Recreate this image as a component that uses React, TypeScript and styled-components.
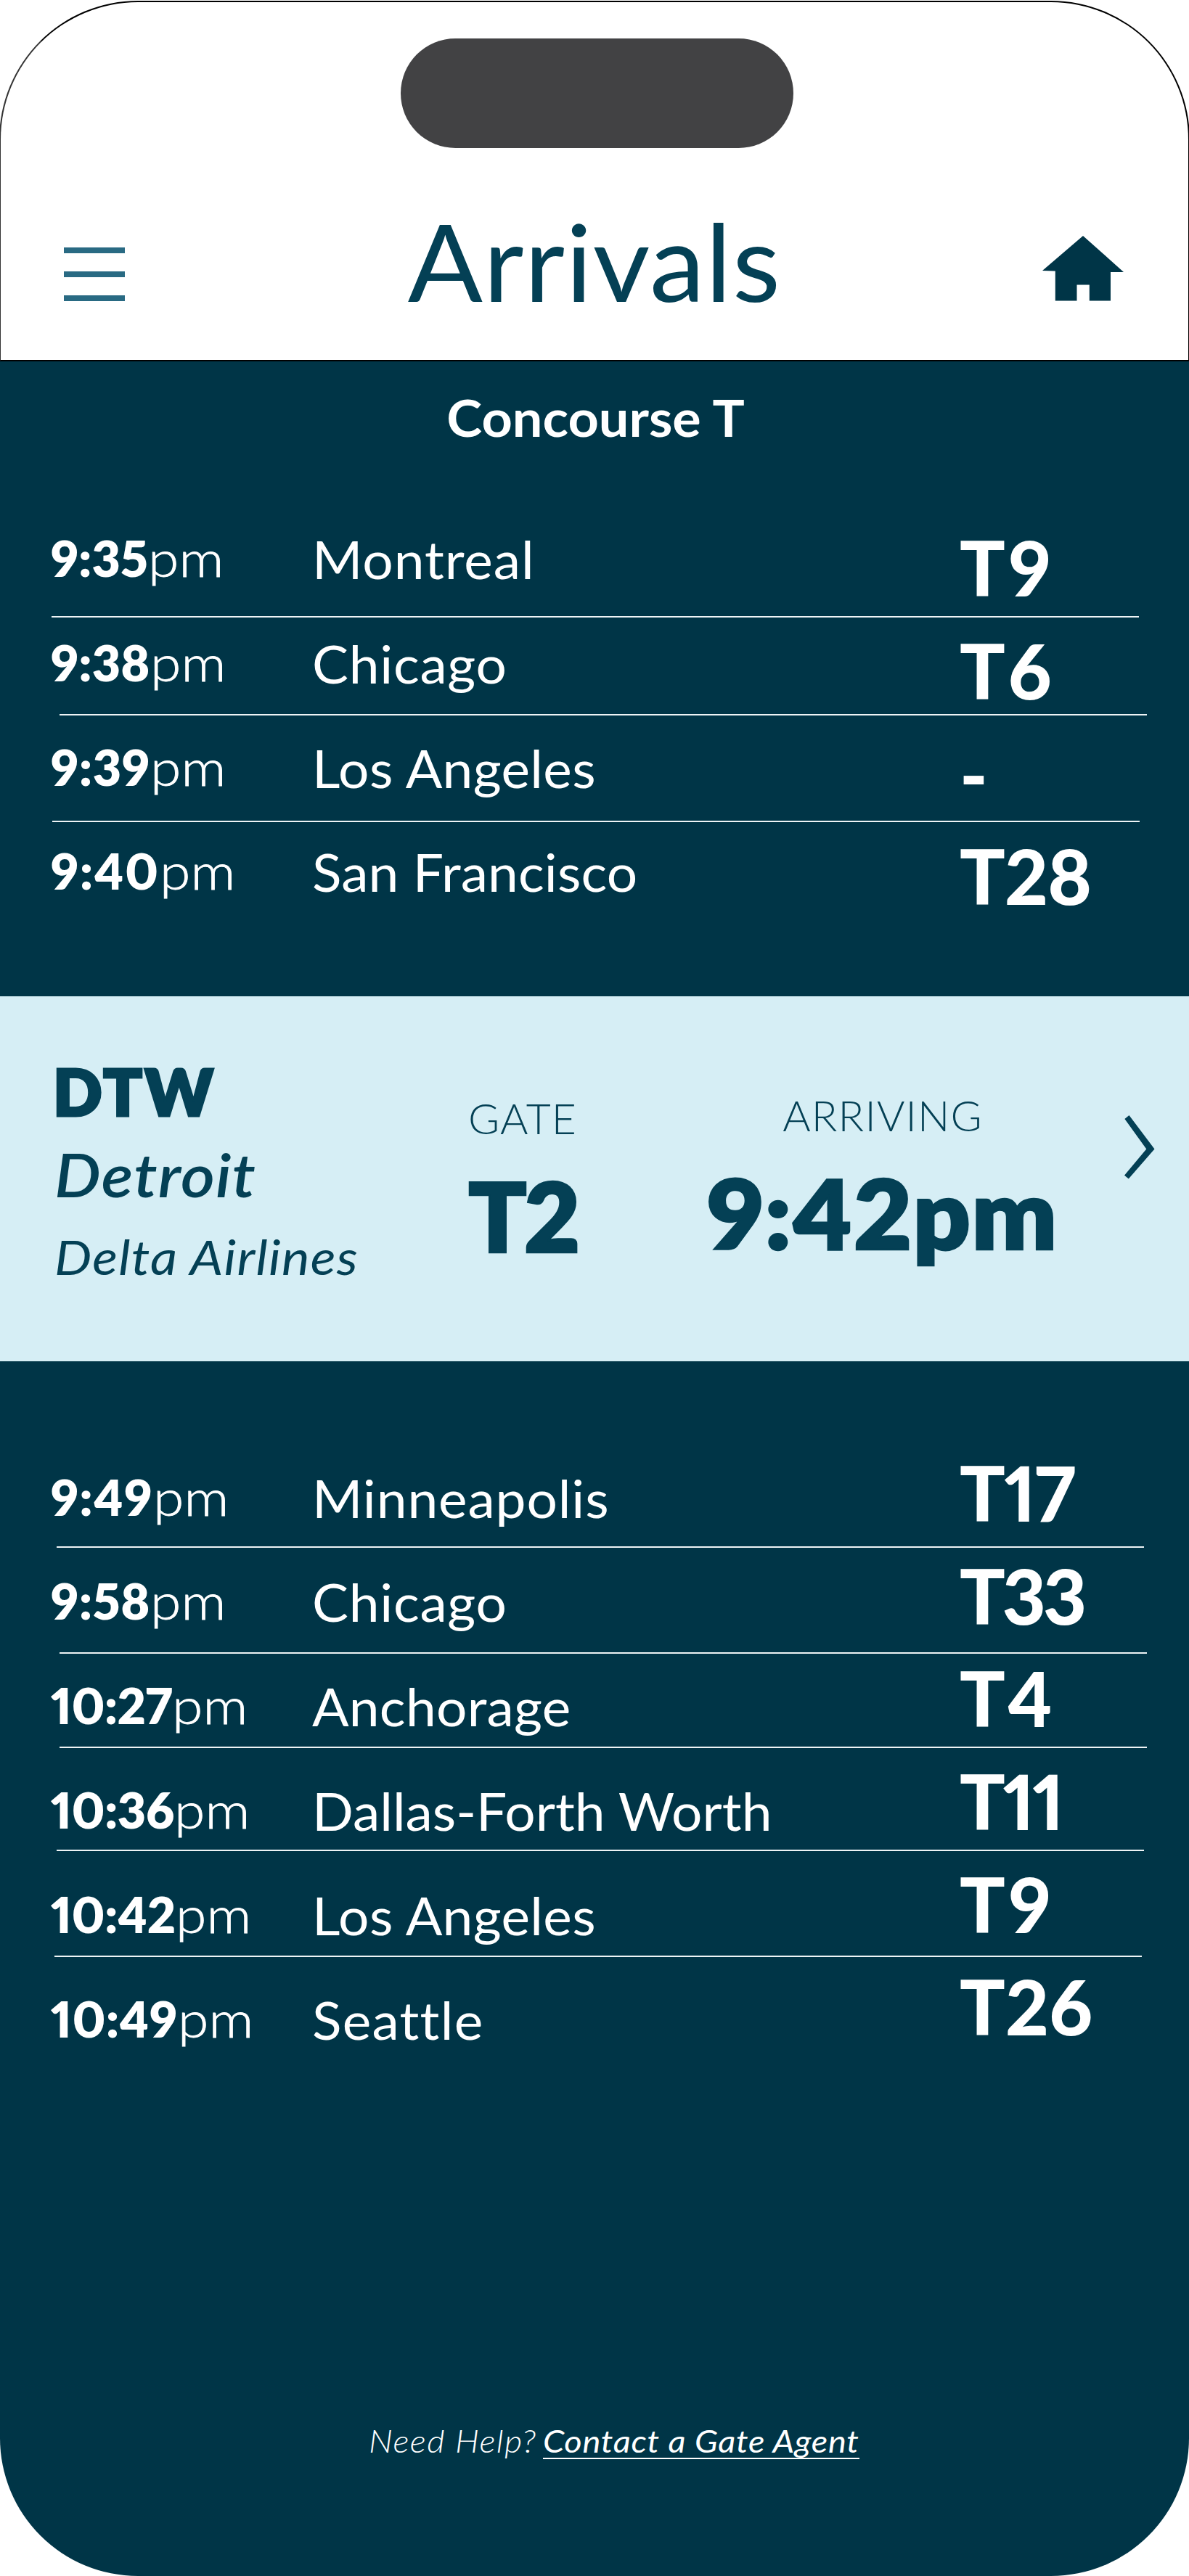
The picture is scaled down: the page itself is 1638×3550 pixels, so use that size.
import React from "react";
import styled, { createGlobalStyle } from "styled-components";

const navy = "#003547";
const ink = "#044055";
const pale = "#d6eef5";

const GlobalStyle = createGlobalStyle`
  * { box-sizing: border-box; }
  body {
    margin: 0;
    background: #fff;
    font-family: Lato, "Open Sans", sans-serif;
  }
  h1, h2, p { margin: 0; font-weight: 400; }
`;

const Screen = styled.main`
  width: 1638px;
  height: 3550px;
  overflow: hidden;
  display: flex;
  flex-direction: column;
`;

const Header = styled.header`
  flex: none;
  height: 497px;
  margin: 1px -1px 0;
  border: 2px solid #000;
  border-left-color: #333;
  border-radius: 191px 191px 0 0;
  display: flex;
  flex-direction: column;
  align-items: center;
`;

const Island = styled.div`
  width: 541px;
  height: 151px;
  margin: 50px 0 0 7px;
  border-radius: 76px;
  background: #424244;
`;

const NavBar = styled.nav`
  width: 1636px;
  display: grid;
  grid-template-columns: 300px 1fr 300px;
  align-items: start;
`;

const MenuButton = styled.button`
  width: 84px;
  height: 74px;
  margin: 137px 0 0 87px;
  padding: 0;
  border: 0;
  background: none;
  display: flex;
  flex-direction: column;
  justify-content: space-between;
`;

const MenuBar = styled.span`
  height: 8px;
  background: #296a83;
`;

const Title = styled.h1`
  margin-top: 75px;
  font-size: 148px;
  line-height: 160px;
  letter-spacing: 1.1px;
  text-align: center;
  color: ${ink};
  transform: scaleX(1.03);
`;

const HomeButton = styled.button`
  width: 112px;
  height: 90px;
  margin: 121px 0 0 99px;
  padding: 0;
  border: 0;
  background: none;
  svg { display: block; }
`;

const Board = styled.section`
  flex: 1;
  display: flex;
  flex-direction: column;
  border-radius: 0 0 190px 190px;
  background: ${navy};
  color: #fff;
`;

const Concourse = styled.h2`
  margin-top: 37px;
  padding-left: 3px;
  font-size: 71px;
  font-weight: 700;
  line-height: 80px;
  text-align: center;
  transform: scaleX(1.04);
`;

const List = styled.div<{ $top: number }>`
  padding-top: ${(p) => p.$top}px;
`;

const Row = styled.div<{ $height: number }>`
  height: ${(p) => p.$height}px;
  padding-left: 70px;
  display: grid;
  grid-template-columns: 360px 892px 1fr;
  align-items: start;
`;

const Time = styled.span<{ $drop: number; $track: number }>`
  padding-top: ${(p) => p.$drop + 2}px;
  font-size: 68px;
  font-weight: 800;
  font-variant-numeric: proportional-nums;
  line-height: 76px;
  letter-spacing: ${(p) => p.$track}px;
  white-space: nowrap;
`;

const Meridiem = styled.span`
  display: inline-block;
  font-weight: 300;
  letter-spacing: 0;
  -webkit-text-stroke: 0.8px currentColor;
  transform: scaleX(1.13);
  transform-origin: 0 50%;
`;

const City = styled.span<{ $drop: number; $track: number }>`
  padding-top: ${(p) => p.$drop + 2}px;
  font-size: 71px;
  line-height: 80px;
  letter-spacing: ${(p) => p.$track}px;
  white-space: nowrap;
  transform: scaleX(1.055);
  transform-origin: 0 50%;
`;

const Gate = styled.span<{ $drop: number; $track: number }>`
  padding-top: ${(p) => p.$drop + 1}px;
  font-size: 104px;
  font-weight: 900;
  font-variant-numeric: proportional-nums;
  line-height: 104px;
  letter-spacing: ${(p) => p.$track}px;
`;

const Rule = styled.div<{ $left: number }>`
  width: 1498px;
  height: 2px;
  margin-left: ${(p) => p.$left}px;
  background: #eef4f6;
`;

const Featured = styled.article`
  flex: none;
  height: 503px;
  padding-left: 75px;
  display: flex;
  align-items: flex-start;
  background: ${pale};
  color: ${ink};
`;

const Origin = styled.div`
  width: 565px;
  padding-top: 86px;
  p { transform-origin: 0 50%; }
`;

const Code = styled.p`
  font-size: 89px;
  font-weight: 800;
  line-height: 90px;
  letter-spacing: 3px;
  margin-left: -2px;
  -webkit-text-stroke: 3px currentColor;
`;

const OriginCity = styled.p`
  margin-top: 24px;
  font-size: 82px;
  font-style: italic;
  font-weight: 600;
  line-height: 90px;
  letter-spacing: 1px;
  transform: scaleX(1.1);
`;

const Airline = styled.p`
  margin-top: 34px;
  font-size: 66px;
  font-style: italic;
  line-height: 70px;
  letter-spacing: 1.1px;
  transform: scaleX(1.1);
`;

const Fact = styled.div<{ $width: number; $top: number; $gap: number }>`
  width: ${(p) => p.$width}px;
  margin-left: ${(p) => p.$gap}px;
  padding-top: ${(p) => p.$top}px;
  text-align: center;
  white-space: nowrap;
`;

const Label = styled.p`
  font-size: 56.5px;
  font-weight: 300;
  line-height: 60px;
  letter-spacing: 1.1px;
  transform: scaleX(1.04);
`;

const Value = styled.p<{ $track: number; $stretch: number }>`
  margin-top: 37px;
  font-size: 133px;
  font-weight: 800;
  font-variant-numeric: proportional-nums;
  line-height: 134px;
  letter-spacing: ${(p) => p.$track}px;
  -webkit-text-stroke: 2.5px currentColor;
  transform: scaleX(${(p) => p.$stretch});
`;

const Chevron = styled.svg`
  flex: none;
  width: 42px;
  height: 88px;
  margin: 164px 0 0 77px;
`;

const Footer = styled.footer`
  display: flex;
  padding: 491px 0 0 508px;
  font-size: 43.5px;
  font-style: italic;
  line-height: 50px;
`;

const FooterText = styled.span<{ $track: number }>`
  display: inline-block;
  letter-spacing: ${(p) => p.$track}px;
  white-space: nowrap;
  transform: scaleX(1.08);
  transform-origin: 0 50%;
`;

const Prompt = styled.span`
  flex: 0 0 240px;
  font-weight: 300;
`;

const HelpLink = styled.a`
  flex: 0 0 436px;
  height: 51px;
  border-bottom: 2px solid #fff;
`;

type Flight = {
  time: string;
  city: string;
  gate: string;
  height: number;
  drop: number;
  gateDrop: number;
  track: [time: number, city: number, gate: number];
  rule?: number;
};

const earlier: Flight[] = [
  { time: "9:35", city: "Montreal", gate: "T9", height: 169, drop: 49, gateDrop: 49, track: [0.1, 0.87, 5], rule: 71 },
  { time: "9:38", city: "Chicago", gate: "T6", height: 133, drop: 22, gateDrop: 20, track: [0.2, 0.67, 4], rule: 82 },
  { time: "9:39", city: "Los Angeles", gate: "-", height: 145, drop: 31, gateDrop: 28, track: [0.8, 0.33, 0], rule: 72 },
  { time: "9:40", city: "San Francisco", gate: "T28", height: 240, drop: 27, gateDrop: 21, track: [1.8, 0.1, -0.8] },
];

const later: Flight[] = [
  { time: "9:49", city: "Minneapolis", gate: "T17", height: 255, drop: 147, gateDrop: 128, track: [1.4, 0.83, -1.4], rule: 78 },
  { time: "9:58", city: "Chicago", gate: "T33", height: 144, drop: 33, gateDrop: 13, track: [0.8, 0.67, -4], rule: 82 },
  { time: "10:27", city: "Anchorage", gate: "T4", height: 128, drop: 31, gateDrop: 8, track: [-0.4, 0.24, 3], rule: 82 },
  { time: "10:36", city: "Dallas-Forth Worth", gate: "T11", height: 140, drop: 45, gateDrop: 20, track: [-0.3, 0, -3], rule: 78 },
  { time: "10:42", city: "Los Angeles", gate: "T9", height: 144, drop: 47, gateDrop: 20, track: [-0.2, 0.33, 5], rule: 75 },
  { time: "10:49", city: "Seattle", gate: "T26", height: 150, drop: 45, gateDrop: 15, track: [0.6, 1.2, 0.3] },
];

function FlightRow({ flight }: { flight: Flight }) {
  const [timeTrack, cityTrack, gateTrack] = flight.track;
  return (
    <>
      <Row $height={flight.height}>
        <Time $drop={flight.drop} $track={timeTrack}>
          {flight.time}
          <Meridiem>pm</Meridiem>
        </Time>
        <City $drop={flight.drop} $track={cityTrack}>{flight.city}</City>
        <Gate $drop={flight.gateDrop} $track={gateTrack}>{flight.gate}</Gate>
      </Row>
      {flight.rule !== undefined && <Rule $left={flight.rule} />}
    </>
  );
}

export default function App() {
  return (
    <Screen>
      <GlobalStyle />
      <Header>
        <Island />
        <NavBar>
          <MenuButton aria-label="Menu">
            <MenuBar />
            <MenuBar />
            <MenuBar />
          </MenuButton>
          <Title>Arrivals</Title>
          <HomeButton aria-label="Home">
            <svg width="112" height="90" viewBox="0 0 112 90">
              <path fill={navy} d="M56 0 112 50H94V89.5H64.8V67.5H47.5V89.5H17.8V48.5L0 48Z" />
            </svg>
          </HomeButton>
        </NavBar>
      </Header>
      <Board>
        <Concourse>Concourse T</Concourse>
        <List $top={65}>
          {earlier.map((f) => <FlightRow key={f.time} flight={f} />)}
        </List>
        <Featured>
          <Origin>
            <Code>DTW</Code>
            <OriginCity>Detroit</OriginCity>
            <Airline>Delta Airlines</Airline>
          </Origin>
          <Fact $width={160} $top={138} $gap={0}>
            <Label>GATE</Label>
            <Value $track={-4} $stretch={1}>T2</Value>
          </Fact>
          <Fact $width={512} $top={134} $gap={160}>
            <Label>ARRIVING</Label>
            <Value $track={1.4} $stretch={1.04}>9:42pm</Value>
          </Fact>
          <Chevron viewBox="0 0 42 88">
            <path fill={ink} d="M6.5 0 41.5 46.4 5.8 87.5 0 82.8 30.3 46.4 .4 5Z" />
          </Chevron>
        </Featured>
        <List $top={0}>
          {later.map((f) => <FlightRow key={f.time} flight={f} />)}
        </List>
        <Footer>
          <Prompt>
            <FooterText $track={1.25}>Need Help?</FooterText>
          </Prompt>
          <HelpLink>
            <FooterText $track={0.66}>Contact a Gate Agent</FooterText>
          </HelpLink>
        </Footer>
      </Board>
    </Screen>
  );
}
